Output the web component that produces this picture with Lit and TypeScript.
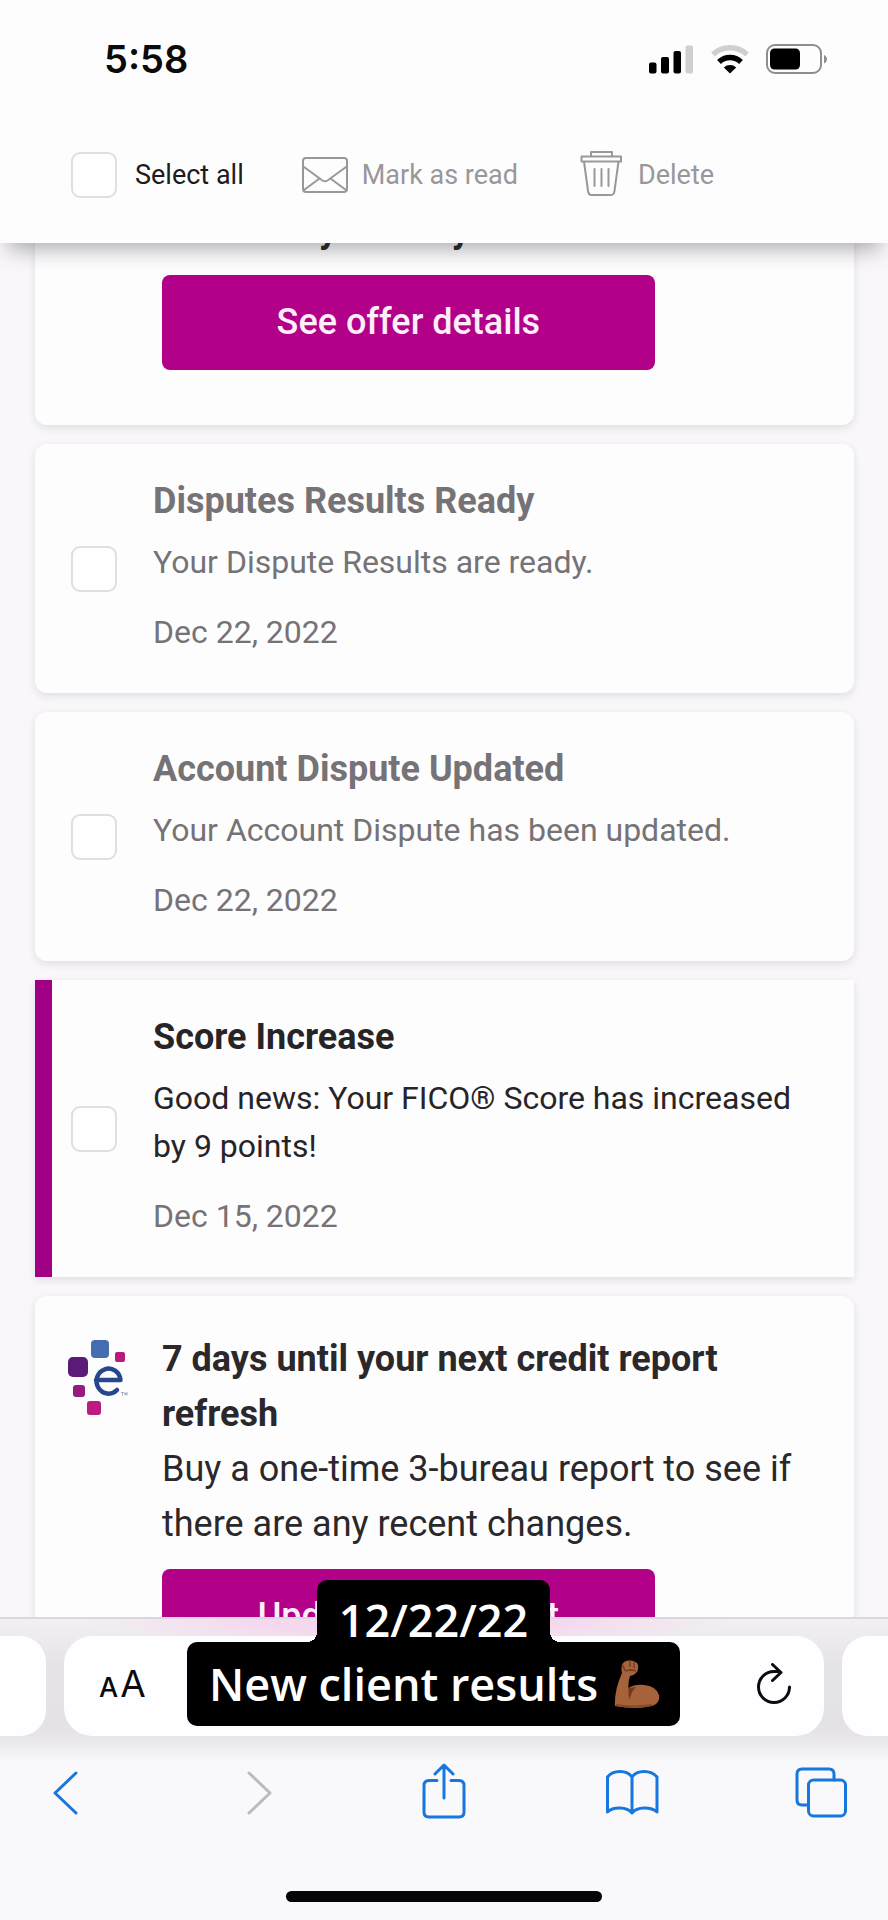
import { LitElement, html, css, svg, nothing } from "lit";
import { customElement, property } from "lit/decorators.js";

interface Alert {
  id: string;
  title: string;
  body: string;
  date: string;
  unread: boolean;
}

const ALERTS: Alert[] = [
  {
    id: "disputes-ready",
    title: "Disputes Results Ready",
    body: "Your Dispute Results are ready.",
    date: "Dec 22, 2022",
    unread: false,
  },
  {
    id: "dispute-updated",
    title: "Account Dispute Updated",
    body: "Your Account Dispute has been updated.",
    date: "Dec 22, 2022",
    unread: false,
  },
  {
    id: "score-increase",
    title: "Score Increase",
    body: "Good news: Your FICO® Score has increased by 9 points!",
    date: "Dec 15, 2022",
    unread: true,
  },
];

const checkboxStyles = css`
  input[type="checkbox"] {
    appearance: none;
    flex: none;
    width: 46px;
    height: 46px;
    margin: 0;
    border: 2px solid #e0dee1;
    border-radius: 9px;
    background: #fffeff;
  }
  input[type="checkbox"]:checked {
    background: #b20089;
  }
`;

@customElement("alert-card")
export class AlertCard extends LitElement {
  @property({ attribute: false }) alert!: Alert;

  static styles = [
    checkboxStyles,
    css`
      :host {
        display: block;
      }
      .card {
        display: flex;
        align-items: center;
        gap: 36px;
        padding: 37px 35px 37px 36px;
        border-radius: 12px;
        background: #fefdfe;
        box-shadow: 0 3px 8px rgba(40, 30, 50, 0.11);
        color: #757376;
      }
      .card.unread {
        padding-left: 19px;
        border-left: 17px solid #a00086;
        border-radius: 0;
        color: #262427;
      }
      .text {
        display: flex;
        flex-direction: column;
      }
      h2 {
        margin: 0 0 17px;
        font-size: 36px;
        line-height: 40px;
        font-weight: 700;
      }
      p {
        margin: 0;
        font-size: 32px;
        line-height: 48px;
      }
      time {
        margin-top: 22px;
        font-size: 32px;
        line-height: 48px;
        color: #757376;
      }
    `,
  ];

  render() {
    const a = this.alert;
    return html`
      <article class="card ${a.unread ? "unread" : ""}">
        <input type="checkbox" id=${a.id} />
        <div class="text">
          <h2><label for=${a.id}>${a.title}</label></h2>
          <p>${a.body}</p>
          <time>${a.date}</time>
        </div>
      </article>
    `;
  }
}

@customElement("offer-card")
export class OfferCard extends LitElement {
  @property() heading = "";
  @property() body = "";
  @property() action = "";
  @property({ type: Boolean }) logo = false;

  static styles = css`
    :host {
      display: block;
    }
    .card {
      display: grid;
      grid-template-columns: 127px 1fr;
      padding: 36px 35px 55px 0;
      border-radius: 12px;
      background: #fefdfe;
      box-shadow: 0 3px 8px rgba(40, 30, 50, 0.11);
      color: #2a282b;
    }
    .logo {
      padding: 5px 0 0 27px;
    }
    .logo svg {
      display: block;
    }
    h2,
    p {
      margin: 0;
      font-size: 36px;
      line-height: 55px;
    }
    h2 {
      font-weight: 700;
    }
    button {
      display: block;
      width: 75%;
      height: 95px;
      margin: 17px 0 0;
      padding: 0 0 2px;
      border: 0;
      border-radius: 8px;
      background: #b20089;
      color: #fdeefb;
      font: 500 36px/54px Roboto, sans-serif;
      white-space: nowrap;
    }
  `;

  render() {
    return html`
      <article class="card">
        <div class="logo">
          ${this.logo
            ? html`<svg width="66" height="78" viewBox="0 0 66 78" role="img" aria-label="Experian">
                <rect x="29" y="3" width="18" height="18" rx="4" fill="#466cb1" />
                <rect x="53" y="15" width="10" height="10" rx="2" fill="#ba1a80" />
                <rect x="6" y="20" width="20" height="20" rx="5" fill="#5c1a78" />
                <rect x="11" y="48" width="12" height="12" rx="3" fill="#961b80" />
                <rect x="25" y="64" width="14" height="14" rx="3" fill="#bb1b80" />
                <path d="M34 43H58.500A12 12.500 0 1 0 55 53" fill="none" stroke="#26478d" stroke-width="4.500" stroke-linejoin="round" stroke-linecap="round" />
                <path d="M59 55.500h3M60.500 55.500v3M63 58.500v-3l1 2 1-2v3" fill="none" stroke="#8590ae" stroke-width=".7" />
              </svg>`
            : nothing}
        </div>
        <div>
          <h2>${this.heading}</h2>
          ${this.body ? html`<p>${this.body}</p>` : nothing}
          <button type="button">${this.action}</button>
        </div>
      </article>
    `;
  }
}

@customElement("app-root")
export class AppRoot extends LitElement {
  static styles = [
    checkboxStyles,
    css`
      :host {
        display: block;
        font-family: Roboto, sans-serif;
      }
      .screen {
        position: relative;
        display: flex;
        flex-direction: column;
        height: 100vh;
        overflow: hidden;
        background: #f9f7fa;
      }
      svg {
        display: block;
        flex: none;
      }
      button {
        margin: 0;
        padding: 0;
        border: 0;
        background: none;
        color: inherit;
        font-family: inherit;
      }

      header {
        position: relative;
        z-index: 1;
        flex: none;
        background: #fefdfe;
        box-shadow: 0 14px 20px -8px rgba(30, 25, 35, 0.36);
      }
      .status {
        display: flex;
        align-items: center;
        justify-content: space-between;
        padding: 35px 60px 0 104px;
        height: 48px;
        color: #0b0a0c;
        font: 600 38px/48px Inter, sans-serif;
      }
      .indicators {
        display: flex;
        align-items: center;
        gap: 17px;
      }
      .toolbar {
        display: flex;
        align-items: center;
        padding: 69px 71px 45px;
        height: 46px;
        font-size: 27px;
        line-height: 42px;
        color: #1c1b1d;
      }
      .toolbar label {
        margin: 0 58px 0 18px;
      }
      .toolbar button {
        display: flex;
        align-items: center;
        gap: 14px;
        margin-right: 62px;
        color: #99979a;
        font-size: 27px;
        line-height: 42px;
      }

      main {
        flex: 1;
        min-height: 0;
        overflow: hidden;
      }
      .list {
        display: flex;
        flex-direction: column;
        gap: 19px;
        margin-top: -76px;
        padding: 0 34px 0 35px;
      }

      .browser {
        flex: none;
        border-top: 2px solid #dbd8dc;
        background: #f9f8fb;
      }
      .tabs {
        display: flex;
        gap: 18px;
        padding: 17px 0 26px;
        background:
          radial-gradient(ellipse 320px 30px at 46% 0, #f6d3ee, #f6d3eecc 50%, #f6d3ee00),
          linear-gradient(#f2f0f3, #e6e4e8 30%, #e4e2e6 75%, #e9e7eb 85%, #f9f8fb);
      }
      .tab {
        flex: none;
        width: 46px;
        height: 100px;
        background: #fefdff;
      }
      .tab.prev {
        border-radius: 0 26px 26px 0;
      }
      .tab.next {
        border-radius: 26px 0 0 26px;
      }
      .address {
        flex: 1;
        display: flex;
        align-items: center;
        justify-content: space-between;
        padding: 0 31px 0 35px;
        height: 100px;
        box-sizing: border-box;
        border-radius: 28px;
        background: #fefdff;
        color: #0b0a0c;
      }
      .text-size {
        display: flex;
        align-items: baseline;
        gap: 2px;
        font: 400 37px/48px Inter, sans-serif;
      }
      .text-size small {
        font-size: 27px;
        font-weight: 500;
      }
      nav {
        display: flex;
        justify-content: space-between;
        padding: 0 39px 69px;
        color: #1877dd;
      }
      .muted {
        color: #bcbabe;
      }
      .home {
        width: 316px;
        height: 11px;
        margin: 0 auto 18px;
        border-radius: 6px;
        background: #050406;
      }

      .caption {
        position: absolute;
        left: 0;
        right: 21px;
        bottom: 194px;
        z-index: 2;
        display: flex;
        flex-direction: column;
        align-items: center;
        color: #fff;
        font: 600 45px/62px "Open Sans", sans-serif;
      }
      .caption-top {
        position: relative;
        padding: 9px 22px 0;
        height: 53px;
        border-radius: 10px 10px 0 0;
        background: #000;
        line-height: 62px;
      }
      .caption-top::before,
      .caption-top::after {
        content: "";
        position: absolute;
        bottom: 0;
        width: 10px;
        height: 10px;
      }
      .caption-top::before {
        right: 100%;
        background: radial-gradient(circle at 0 0, transparent 10px, #000 10px);
      }
      .caption-top::after {
        left: 100%;
        background: radial-gradient(circle at 100% 0, transparent 10px, #000 10px);
      }
      .caption-bottom {
        display: flex;
        align-items: center;
        gap: 16px;
        padding: 0 20px 0 22px;
        height: 84px;
        border-radius: 10px;
        background: #000;
      }
    `,
  ];

  private icon(width: number, height: number, content: unknown, stroke = 3) {
    return html`<svg
      width=${width}
      height=${height}
      viewBox="0 0 ${width} ${height}"
      fill="none"
      stroke="currentColor"
      stroke-width=${stroke}
      stroke-linecap="round"
      stroke-linejoin="round"
      aria-hidden="true"
    >
      ${content}
    </svg>`;
  }

  private renderStatus() {
    return html`
      <div class="status">
        <span>5:58</span>
        <div class="indicators">
          <svg width="45" height="29" viewBox="0 0 45 29" aria-label="Signal">
            <rect x="0" y="17.500" width="7.500" height="11" rx="2" />
            <rect x="12" y="12" width="8" height="16.500" rx="2" />
            <rect x="24.500" y="6" width="7.500" height="22.500" rx="2" />
            <rect x="36.500" y="0.500" width="7.500" height="28" rx="2" fill="#d0ced1" />
          </svg>
          <svg width="38" height="29" viewBox="0 0 38 29" fill="none" aria-label="Wi-Fi">
            <path d="M2 9.500A25 25 0 0 1 36 9.500" stroke="#d0ced1" stroke-width="5.500" />
            <path d="M8 17A16 16 0 0 1 30 17" stroke="#000" stroke-width="5.500" />
            <path d="M19 28.500L12.800 22.500A9 9 0 0 1 25.200 22.500Z" fill="#000" />
          </svg>
          <svg width="62" height="30" viewBox="0 0 62 30" fill="none" aria-label="Battery">
            <rect x="1" y="1" width="54" height="28" rx="8" stroke="#8f8d90" stroke-width="2" />
            <rect x="4" y="4.500" width="30" height="21" rx="4.500" fill="#000" />
            <path d="M58 11c4 1.500 4 7 0 8.500z" fill="#8f8d90" />
          </svg>
        </div>
      </div>
    `;
  }

  private renderToolbar() {
    return html`
      <div class="toolbar">
        <input type="checkbox" id="select-all" />
        <label for="select-all">Select all</label>
        <button type="button">
          ${this.icon(
            46,
            38,
            svg`<rect x="1" y="2" width="44" height="34" rx="3" />
              <path d="M2 11L20.500 24.500q2.500 1.500 5 0L44 11M2 34L17.500 22.500M44 34L28.500 22.500" />`,
            2
          )}
          Mark as read
        </button>
        <button type="button">
          ${this.icon(
            44,
            48,
            svg`<path d="M11 5.500V1H32V5.500M1.500 5.500H41V10.500H1.500ZM4 10.500L8 40q.6 4 3.500 4H31q3 0 3.500-4L38.500 10.500M14.500 18V35M21.500 18V35M28.500 18V35" />`,
            2
          )}
          Delete
        </button>
      </div>
    `;
  }

  render() {
    return html`
      <div class="screen">
        <header>${this.renderStatus()} ${this.renderToolbar()}</header>

        <main>
          <div class="list">
            <offer-card heading="Credit may be easy" action="See offer details"></offer-card>
            ${ALERTS.map((a) => html`<alert-card .alert=${a}></alert-card>`)}
            <offer-card
              logo
              heading="7 days until your next credit report refresh"
              body="Buy a one-time 3-bureau report to see if there are any recent changes."
              action="Update your report"
            ></offer-card>
          </div>
        </main>

        <footer class="browser">
          <div class="tabs">
            <div class="tab prev"></div>
            <div class="address">
              <button type="button" class="text-size" aria-label="Text size">
                <small>A</small><span>A</span>
              </button>
              <button type="button" aria-label="Reload">
                ${this.icon(
                  38,
                  46,
                  svg`<path d="M19 8.500A15.500 15.500 0 1 0 34.500 24M17.500 1.500L26 9.500L17.500 17.500M19 8.500H25" />`
                )}
              </button>
            </div>
            <div class="tab next"></div>
          </div>
          <nav>
            <button type="button" aria-label="Back">
              ${this.icon(54, 60, svg`<path d="M37 11L16 31L37 51" />`)}
            </button>
            <button type="button" aria-label="Forward" class="muted">
              ${this.icon(54, 60, svg`<path d="M21 11L42 31L21 51" />`)}
            </button>
            <button type="button" aria-label="Share">
              ${this.icon(
                54,
                60,
                svg`<path d="M20 18.500H12q-5 0-5 5V50q0 5 5 5H42q5 0 5-5V23.500q0-5-5-5H34M27 36V3M18 12L27 3L36 12" />`
              )}
            </button>
            <button type="button" aria-label="Bookmarks">
              ${this.icon(
                54,
                60,
                svg`<path d="M26 15C21 7.500 7 7.500 1.500 15V50C7 44.500 21 44.500 26 51C31 44.500 45 44.500 51 50V15C45 7.500 31 7.500 26 15V51" />`
              )}
            </button>
            <button type="button" aria-label="Tabs">
              ${this.icon(
                54,
                60,
                svg`<rect x="13.500" y="18" width="37" height="36" rx="5" />
                  <path d="M39 18V12q0-5-5-5H7Q2 7 2 12V38q0 5 5 5H13" />`
              )}
            </button>
          </nav>
          <div class="home"></div>
        </footer>

        <div class="caption">
          <div class="caption-top">12/22/22</div>
          <div class="caption-bottom">
            <span>New client results</span>
            <svg width="46" height="50" viewBox="0 0 46 50" role="img" aria-label="Flexed biceps">
              <path
                d="M8 6Q10 1 16 1.500Q23 2 24 6Q25 11 22 14Q19 17 16 17Q14 22 14.500 29Q21 25 30 26Q42 27 45 36Q46.500 44 38 47Q22 51 1 47Q0 32 8 14Q7 10 8 6Z"
                fill="#a6623a"
              />
              <path d="M14.500 29Q14 36 15.500 41Q17 33 22 28" fill="#70391d" />
              <path d="M9 6Q10 11 12 12Q17 10 22 12M16 2.500V8M20 3V9" fill="none" stroke="#70391d" stroke-width="1.300" />
              <path d="M2 46Q20 49 38 46" fill="none" stroke="#8a4a28" stroke-width="2" />
            </svg>
          </div>
        </div>
      </div>
    `;
  }
}
